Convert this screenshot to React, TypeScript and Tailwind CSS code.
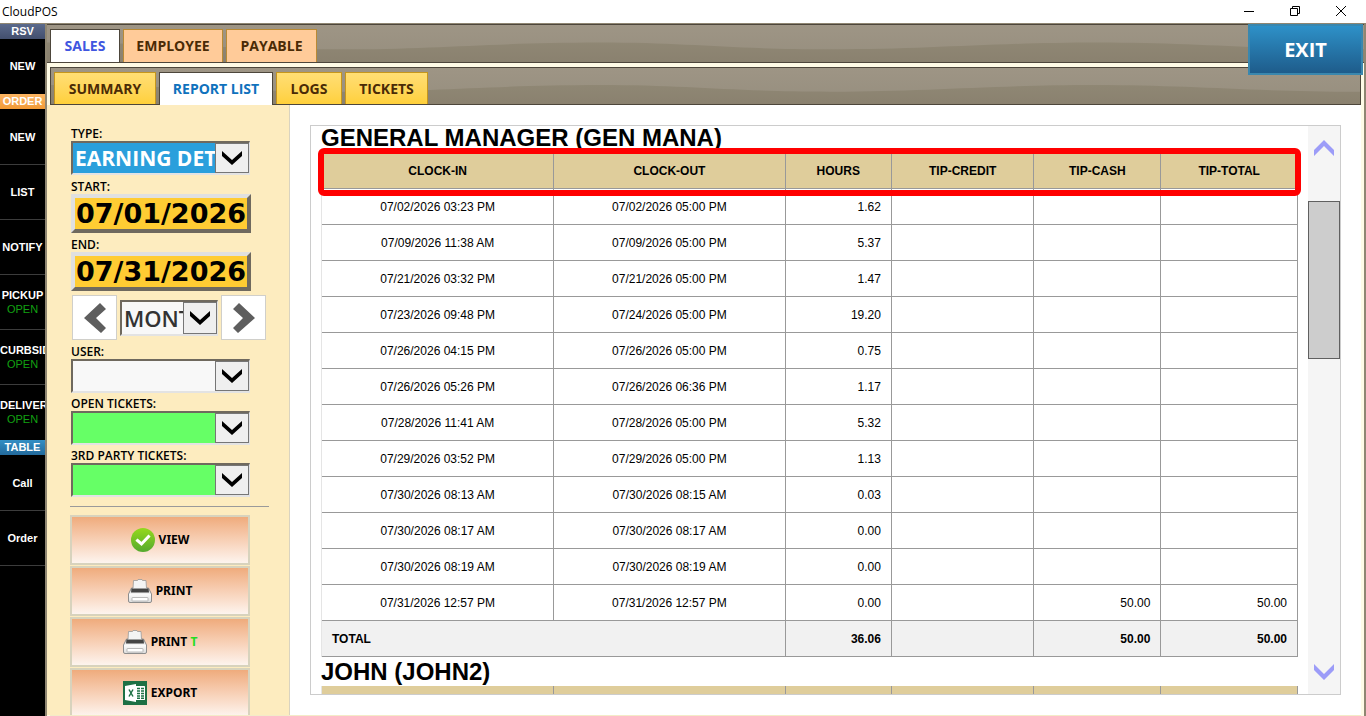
import type { ReactNode } from 'react';

const columns = ['CLOCK-IN', 'CLOCK-OUT', 'HOURS', 'TIP-CREDIT', 'TIP-CASH', 'TIP-TOTAL'];

const shifts = [
    ['07/02/2026 03:23 PM', '07/02/2026 05:00 PM', '1.62', '', '', ''],
    ['07/09/2026 11:38 AM', '07/09/2026 05:00 PM', '5.37', '', '', ''],
    ['07/21/2026 03:32 PM', '07/21/2026 05:00 PM', '1.47', '', '', ''],
    ['07/23/2026 09:48 PM', '07/24/2026 05:00 PM', '19.20', '', '', ''],
    ['07/26/2026 04:15 PM', '07/26/2026 05:00 PM', '0.75', '', '', ''],
    ['07/26/2026 05:26 PM', '07/26/2026 06:36 PM', '1.17', '', '', ''],
    ['07/28/2026 11:41 AM', '07/28/2026 05:00 PM', '5.32', '', '', ''],
    ['07/29/2026 03:52 PM', '07/29/2026 05:00 PM', '1.13', '', '', ''],
    ['07/30/2026 08:13 AM', '07/30/2026 08:15 AM', '0.03', '', '', ''],
    ['07/30/2026 08:17 AM', '07/30/2026 08:17 AM', '0.00', '', '', ''],
    ['07/30/2026 08:19 AM', '07/30/2026 08:19 AM', '0.00', '', '', ''],
    ['07/31/2026 12:57 PM', '07/31/2026 12:57 PM', '0.00', '', '50.00', '50.00'],
];

const BandWave = () => (
    <svg className="absolute inset-0 h-full w-full" viewBox="0 0 1310 38" preserveAspectRatio="none" aria-hidden="true">
        <defs>
            <linearGradient id="band" x1="0" y1="0" x2="0" y2="1">
                <stop offset="0" stopColor="#9e9585" />
                <stop offset="1" stopColor="#968e7e" />
            </linearGradient>
            <linearGradient id="wave" x1="0" y1="0" x2="0" y2="1">
                <stop offset="0" stopColor="#8f8774" />
                <stop offset="1" stopColor="#8a816f" />
            </linearGradient>
        </defs>
        <rect width="1310" height="38" fill="url(#band)" />
        <path d="M0 18C110 18 180 25 290 25C390 25 440 18 550 18C640 18 680 25 780 25C880 25 940 18 1046 18C1140 18 1200 25 1310 25V38H0Z" fill="url(#wave)" />
    </svg>
);

const Chevron = () => (
    <span className="pointer-events-none flex w-[34px] shrink-0 items-center justify-center border border-[#767676] bg-[#efefef]">
        <svg width="20" height="14" viewBox="0 0 20 14" aria-hidden="true">
            <path d="M0 0L10 9L20 0V5L10 14L0 5Z" fill="#000" />
        </svg>
    </span>
);

type DropDownProps = { id: string; value?: string; box: string; look: string };

const DropDown = ({ id, value = '', box, look }: DropDownProps) => (
    <div className={`flex border-2 border-r border-t-[#6f695e] border-l-[#6f695e] border-r-[#e3e3e3] border-b-[#e3e3e3] bg-white ${box}`}>
        <select id={id} defaultValue={value} className={`min-w-0 flex-1 appearance-none overflow-hidden pl-0.5 outline-none ${look}`}>
            <option value={value}>{value}</option>
        </select>
        <Chevron />
    </div>
);

const FieldLabel = ({ htmlFor, children }: { htmlFor: string; children: string }) => (
    <label htmlFor={htmlFor} className="block h-[17px] text-xs leading-[19px] font-semibold text-black">
        {children}
    </label>
);

const DateField = ({ id, label, value }: { id: string; label: string; value: string }) => (
    <div>
        <FieldLabel htmlFor={id}>{label}</FieldLabel>
        <input
            id={id}
            type="text"
            defaultValue={value}
            className="block h-[39px] w-[180px] border-4 border-t-[#e0e0e0] border-r-[#6f695e] border-b-[#6f695e] border-l-[#e0e0e0] bg-[#ffcc33] pt-0.5 text-center font-['DejaVu_Sans',sans-serif] text-[27px] font-bold text-black outline-none"
        />
    </div>
);

const CheckIcon = () => (
    <svg width="24" height="24" viewBox="0 0 24 24" aria-hidden="true">
        <defs>
            <linearGradient id="check" x1="0" y1="0" x2="0" y2="1">
                <stop offset="0" stopColor="#94d91d" />
                <stop offset="1" stopColor="#55a92f" />
            </linearGradient>
        </defs>
        <circle cx="12" cy="12" r="12" fill="url(#check)" />
        <path d="M6.500 12.500L10.500 16L17.500 8.500" fill="none" stroke="#fff" strokeWidth="3" strokeLinecap="square" />
    </svg>
);

const PrinterIcon = () => (
    <svg width="24" height="24" viewBox="0 0 24 24" aria-hidden="true">
        <defs>
            <linearGradient id="tray" x1="0" y1="0" x2="0" y2="1">
                <stop offset="0" stopColor="#c4c4c4" />
                <stop offset=".45" stopColor="#fafafa" />
                <stop offset="1" stopColor="#dcdcdc" />
            </linearGradient>
        </defs>
        <path d="M3.500 9H20.500L23.500 15V22Q23.500 23.500 22 23.500H2Q.5 23.500 .5 22V15Z" fill="url(#tray)" stroke="#8d8d8d" />
        <path d="M3.500 9.500H20.500L21 13.500H3Z" fill="#444" />
        <path d="M5.500 1.500H9.500L10 .5H14L14.500 1.500H18L18.500 9.500H5Z" fill="#f4f4f4" stroke="#999" strokeWidth=".8" />
        <rect x="4" y="18.500" width="16" height="3.500" rx=".5" fill="#fff" stroke="#aaa" strokeWidth=".8" />
    </svg>
);

const ExcelIcon = () => (
    <svg width="24" height="24" viewBox="0 0 24 24" aria-hidden="true">
        <rect width="24" height="24" fill="#1d7044" />
        <rect x="12" y="5" width="10" height="14" rx=".5" fill="#fff" />
        <path d="M14 7.500H17M18 7.500H21M14 10H17M18 10H21M14 12.500H17M18 12.500H21M14 15H17M18 15H21M14 17.200H17M18 17.200H21" stroke="#1d7044" strokeWidth="1.500" />
        <path d="M2 5L13 3V21L2 19Z" fill="#fff" />
        <path d="M6 8.500L10 15.500M10 8.500L6 15.500" stroke="#1d7044" strokeWidth="1.500" />
    </svg>
);

const ActionButton = ({ icon, children }: { icon: ReactNode; children: ReactNode }) => (
    <button
        type="button"
        className="flex h-[50px] w-[180px] shrink-0 items-center justify-center gap-1 border-2 border-[#d8d3bd] bg-linear-to-b from-[#efab7c] to-[#fdf4ee] text-xs font-bold text-black"
    >
        {icon}
        <span>{children}</span>
    </button>
);

const SideHeader = ({ look, children }: { look: string; children: string }) => (
    <div className={`h-[15px] shrink-0 text-center text-[11px] leading-[15px] font-bold text-white ${look}`}>{children}</div>
);

const SideItem = ({ label, status, last }: { label: string; status?: string; last?: boolean }) => (
    <button
        type="button"
        className={`flex h-[55px] w-full shrink-0 flex-col justify-center overflow-hidden border-b text-[11px] leading-[14px] font-bold text-white ${last ? 'border-black' : 'border-[#3c3c3c]'}`}
    >
        <span className="min-w-full text-center">{label}</span>
        {status && <span className="w-full text-center font-normal text-[#12a112]">{status}</span>}
    </button>
);

const ReportHead = () => (
    <>
        <colgroup>
            <col className="w-[23.8%]" />
            <col className="w-[23.7%]" />
            <col className="w-[10.9%]" />
            <col className="w-[14.6%]" />
            <col className="w-[13%]" />
            <col className="w-[14%]" />
        </colgroup>
        <thead>
            <tr className="h-9 bg-[#dfcd9b]">
                {columns.map((name) => (
                    <th key={name} scope="col" className="border-r border-b border-[#999] font-bold">
                        {name}
                    </th>
                ))}
            </tr>
        </thead>
    </>
);

const tableLook = 'w-full table-fixed border-separate border-spacing-0 border-l border-[#e5e5e5] text-xs text-black';

const App = () => {
    return (
        <div className="flex h-screen flex-col overflow-hidden bg-white font-['Open_Sans',sans-serif]">
            <header className="flex h-[23px] shrink-0 items-center justify-between bg-white pr-0.5 pl-0.5">
                <h1 className="text-xs text-black">CloudPOS</h1>
                <div className="flex h-full items-center">
                    <button type="button" aria-label="Minimize" className="flex h-full w-[46px] items-center justify-center pb-0.5">
                        <svg width="10" height="10" viewBox="0 0 10 10" aria-hidden="true">
                            <path d="M0 5.500H10" stroke="#000" />
                        </svg>
                    </button>
                    <button type="button" aria-label="Restore" className="flex h-full w-[46px] items-center justify-center pb-0.5">
                        <svg width="10" height="10" viewBox="0 0 10 10" fill="none" stroke="#000" aria-hidden="true">
                            <path d="M.5 2.500H7.500V9.500H.5ZM2.500 2.500V.5H9.500V7.500H7.500" />
                        </svg>
                    </button>
                    <button type="button" aria-label="Close" className="flex h-full w-[46px] items-center justify-center pb-0.5">
                        <svg width="10" height="10" viewBox="0 0 10 10" aria-hidden="true">
                            <path d="M0 0L10 10M10 0L0 10" stroke="#000" />
                        </svg>
                    </button>
                </div>
            </header>

            <div className="flex min-h-0 flex-1">
                {/* Order shortcuts */}
                <nav className="flex w-[45px] shrink-0 flex-col overflow-hidden border-t border-[#8f8672] bg-black font-['Liberation_Sans',sans-serif]">
                    <SideHeader look="bg-linear-to-b from-[#5b6a8c] to-[#434f6e]">RSV</SideHeader>
                    <SideItem label="NEW" last />
                    <SideHeader look="mb-px bg-linear-to-b from-[#fcb562] to-[#f29a35]">ORDER</SideHeader>
                    <SideItem label="NEW" />
                    <SideItem label="LIST" />
                    <SideItem label="NOTIFY" />
                    <SideItem label="PICKUP" status="OPEN" />
                    <SideItem label="CURBSIDE" status="OPEN" />
                    <SideItem label="DELIVERY" status="OPEN" last />
                    <SideHeader look="mb-px bg-linear-to-b from-[#338fc4] to-[#236a9c]">TABLE</SideHeader>
                    <SideItem label="Call" />
                    <SideItem label="Order" />
                </nav>

                <div className="relative flex min-w-0 flex-1 flex-col border-t border-r-2 border-l-2 border-[#8f8672] bg-[#fffbe6]">
                    {/* Main tabs */}
                    <div className="relative flex h-[39px] shrink-0 items-end border-y border-[#4d463b]">
                        <BandWave />
                        <div className="relative flex items-end gap-[3px] pl-[3px] text-sm font-bold">
                            <button type="button" className="h-[33px] w-[70px] border border-b-0 border-[#4d463b] bg-white text-[#4056e0]">
                                SALES
                            </button>
                            <button type="button" className="h-[33px] w-[100px] border border-b-0 border-[#b98a35] bg-[#ffcb99] text-[#4a2b06]">
                                EMPLOYEE
                            </button>
                            <button type="button" className="h-[33px] w-[91px] border border-b-0 border-[#b98a35] bg-[#ffcb99] text-[#4a2b06]">
                                PAYABLE
                            </button>
                        </div>
                    </div>
                    <button
                        type="button"
                        className="absolute top-0 right-px z-10 h-[51px] w-[115px] border-2 border-[#3a87ae] bg-linear-to-b from-[#2e91c8] to-[#1e5c8b] text-xl font-bold text-white"
                    >
                        EXIT
                    </button>

                    <div className="mt-1 mr-[3px] ml-[3px] flex min-h-0 flex-1 flex-col">
                        {/* Sales tabs */}
                        <div className="relative flex h-[38px] shrink-0 items-end border border-[#4d463b]">
                            <BandWave />
                            <div className="relative flex items-end gap-[3px] pl-[3px] text-sm font-bold text-[#4a2b06]">
                                <button type="button" className="h-8 w-[102px] border border-b-0 border-[#c6961c] bg-linear-to-b from-[#ffde74] to-[#ffd03a]">
                                    SUMMARY
                                </button>
                                <button type="button" className="-mb-px h-[33px] w-[114px] border border-b-0 border-[#4d463b] bg-white text-[#0f72bd]">
                                    REPORT LIST
                                </button>
                                <button type="button" className="h-8 w-[66px] border border-b-0 border-[#c6961c] bg-linear-to-b from-[#ffde74] to-[#ffd03a]">
                                    LOGS
                                </button>
                                <button type="button" className="h-8 w-[83px] border border-b-0 border-[#c6961c] bg-linear-to-b from-[#ffde74] to-[#ffd03a]">
                                    TICKETS
                                </button>
                            </div>
                        </div>

                        <div className="flex min-h-0 flex-1 bg-white">
                            {/* Filters */}
                            <aside className="-ml-[3px] flex w-[243px] shrink-0 flex-col overflow-hidden border-r border-[#d9d3c0] bg-[#fdecbf] pt-[19px] pl-[23px]">
                                <div className="flex flex-col gap-0.5 pl-px">
                                    <div>
                                        <FieldLabel htmlFor="type">TYPE:</FieldLabel>
                                        <DropDown id="type" value="EARNING DETAIL" box="h-[34px] w-[179px]" look="bg-[#2a9fdc] text-[21px] font-bold text-white" />
                                    </div>
                                    <DateField id="start" label="START:" value="07/01/2026" />
                                    <DateField id="end" label="END:" value="07/31/2026" />
                                </div>
                                <div className="mt-1 flex items-center gap-[3px] pl-0.5">
                                    <button type="button" aria-label="Previous" className="flex h-[45px] w-[45px] items-center justify-center border border-[#d0cfca] bg-white">
                                        <svg width="22" height="30" viewBox="0 0 22 30" aria-hidden="true">
                                            <path d="M16 0L22 6L12 15L22 25L17 30L0 15Z" fill="#5e5e5e" />
                                        </svg>
                                    </button>
                                    <DropDown id="period" value="MONTH" box="h-9 w-[98px]" look="bg-[#f8f8f8] text-[22px] font-semibold text-[#333]" />
                                    <button type="button" aria-label="Next" className="flex h-[45px] w-[45px] items-center justify-center border border-[#d0cfca] bg-white">
                                        <svg width="22" height="30" viewBox="0 0 22 30" aria-hidden="true">
                                            <path d="M6 0L0 6L10 15L0 25L5 30L22 15Z" fill="#5e5e5e" />
                                        </svg>
                                    </button>
                                </div>
                                <div className="mt-0.5 flex flex-col gap-px pl-px">
                                    <div>
                                        <FieldLabel htmlFor="user">USER:</FieldLabel>
                                        <DropDown id="user" box="h-[34px] w-[179px]" look="bg-[#f8f8f8] text-[21px]" />
                                    </div>
                                    <div>
                                        <FieldLabel htmlFor="open-tickets">OPEN TICKETS:</FieldLabel>
                                        <DropDown id="open-tickets" box="h-[34px] w-[179px]" look="bg-[#66ff66] text-[21px]" />
                                    </div>
                                    <div>
                                        <FieldLabel htmlFor="party-tickets">3RD PARTY TICKETS:</FieldLabel>
                                        <DropDown id="party-tickets" box="h-[34px] w-[179px]" look="bg-[#66ff66] text-[21px]" />
                                    </div>
                                </div>
                                <hr className="mt-[9px] mb-2 w-[199px] shrink-0 border-[#9a9a9a]" />
                                <div className="flex flex-col gap-px font-['Noto_Sans',sans-serif]">
                                    <ActionButton icon={<CheckIcon />}>VIEW</ActionButton>
                                    <ActionButton icon={<PrinterIcon />}>PRINT</ActionButton>
                                    <ActionButton icon={<PrinterIcon />}>
                                        PRINT <span className="text-[#22dd22]">T</span>
                                    </ActionButton>
                                    <ActionButton icon={<ExcelIcon />}>EXPORT</ActionButton>
                                </div>
                            </aside>

                            {/* Report */}
                            <main className="flex min-w-0 flex-1 p-5">
                                <div className="flex min-w-0 flex-1 border border-[#ccc]">
                                    <div className="min-w-0 flex-1 overflow-hidden px-2.5 font-['Liberation_Sans',sans-serif]">
                                        <h2 className="h-[27px] text-2xl leading-[23px] font-bold text-black">GENERAL MANAGER (GEN MANA)</h2>
                                        <div className="relative">
                                            <table className={tableLook}>
                                                <ReportHead />
                                                <tbody>
                                                    {shifts.map((row) => (
                                                        <tr key={row[0]} className="h-9">
                                                            {row.map((cell, i) => (
                                                                <td
                                                                    key={columns[i]}
                                                                    className={`border-r border-b border-[#999] ${i < 2 ? 'text-center' : 'pr-2.5 text-right'}`}
                                                                >
                                                                    {cell}
                                                                </td>
                                                            ))}
                                                        </tr>
                                                    ))}
                                                </tbody>
                                                <tfoot>
                                                    <tr className="h-9 bg-[#f1f1f1] text-right font-bold">
                                                        <td colSpan={2} className="border-r border-b border-[#999] pl-2.5 text-left">TOTAL</td>
                                                        <td className="border-r border-b border-[#999] pr-2.5">36.06</td>
                                                        <td className="border-r border-b border-[#999]"></td>
                                                        <td className="border-r border-b border-[#999] pr-2.5">50.00</td>
                                                        <td className="border-r border-b border-[#999] pr-2.5">50.00</td>
                                                    </tr>
                                                </tfoot>
                                            </table>
                                            <div className="absolute -inset-x-[3px] -top-[5px] h-12 rounded-md border-[6px] border-[#ff0000]"></div>
                                        </div>
                                        <h2 className="h-[29px] text-2xl leading-[29px] font-bold text-black">JOHN (JOHN2)</h2>
                                        <table className={tableLook}>
                                            <ReportHead />
                                        </table>
                                    </div>

                                    <div className="flex w-8 shrink-0 flex-col items-center bg-[#f5f5f5]">
                                        <button type="button" aria-label="Scroll up" className="flex h-[75px] w-full shrink-0 items-start justify-center pt-3.5">
                                            <svg width="20" height="16" viewBox="0 0 20 16" aria-hidden="true">
                                                <path d="M0 10L10 0L20 10V16L10 6L0 16Z" fill="#9c9cf8" />
                                            </svg>
                                        </button>
                                        <div className="h-[158px] w-full shrink-0 border border-[#606060] bg-[#cdcdcd]"></div>
                                        <div className="flex-1"></div>
                                        <button type="button" aria-label="Scroll down" className="flex w-full shrink-0 items-center justify-center pb-3.5">
                                            <svg width="20" height="16" viewBox="0 0 20 16" aria-hidden="true">
                                                <path d="M0 6L10 16L20 6V0L10 10L0 0Z" fill="#9c9cf8" />
                                            </svg>
                                        </button>
                                    </div>
                                </div>
                            </main>
                        </div>
                        <div className="h-px shrink-0 bg-[#f3ecc8]"></div>
                    </div>
                </div>
            </div>
        </div>
    );
};

export default App;
